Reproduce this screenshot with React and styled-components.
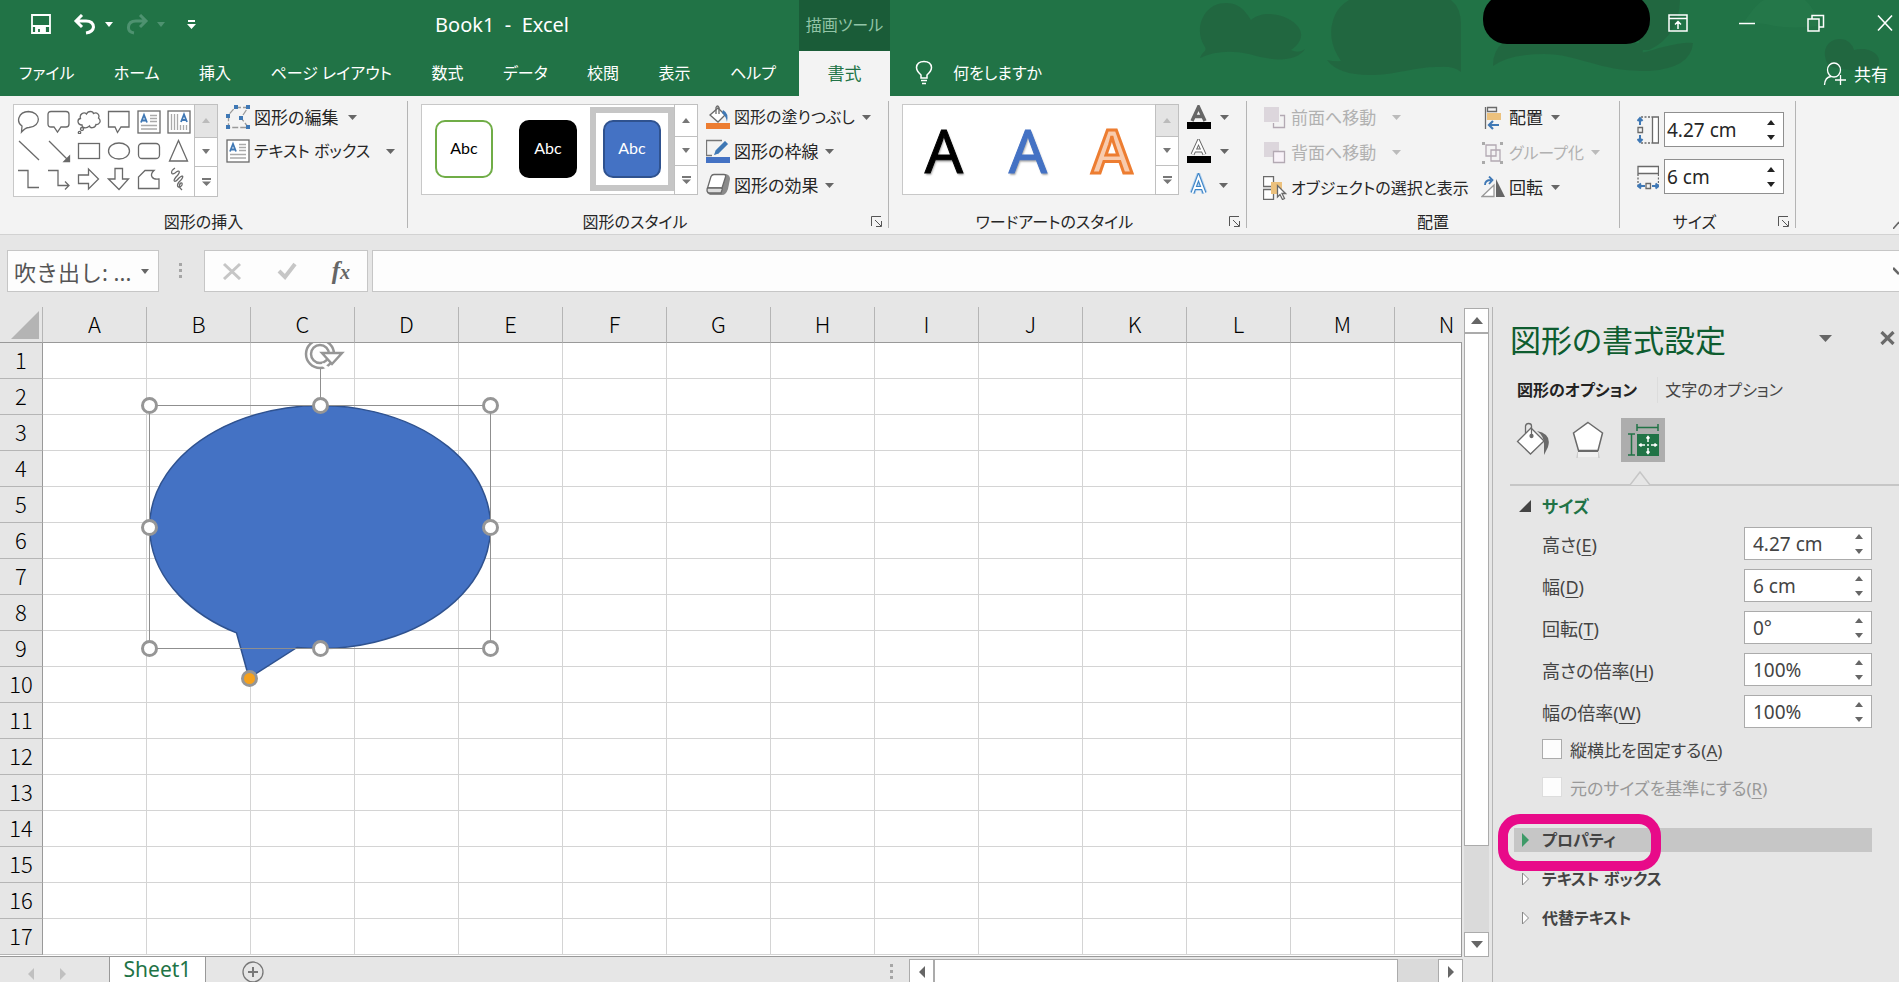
import React, {useState} from 'react';
import styled, {createGlobalStyle} from 'styled-components';

const COLUMNS = ['A', 'B', 'C', 'D', 'E', 'F', 'G', 'H', 'I', 'J', 'K', 'L', 'M', 'N'];
const ROWS = Array.from({length: 17}, (_, i) => i + 1);
const TABS = ['ファイル', 'ホーム', '挿入', 'ページ レイアウト', '数式', 'データ', '校閲', '表示', 'ヘルプ'];

const Caret = ({color = '#666', up, size = 9}) => (
  <svg width={size} height={size > 10 ? 7 : 5} viewBox="0 0 10 5" preserveAspectRatio="none" aria-hidden="true">
    <path d={up ? 'M0 5L5 0L10 5Z' : 'M0 0H10L5 5Z'} fill={color}/>
  </svg>
);

const Icon = ({w = 24, h = 24, children}) => (
  <svg width={w} height={h} viewBox={`0 0 ${w} ${h}`} fill="none" stroke="#6a6a6a" strokeWidth="1.3" aria-hidden="true">
    {children}
  </svg>
);

const TextBoxShape = () => (
  <>
    <rect x="1" y="1" width="22" height="22" fill="#fff"/>
    <path d="M13 5.500h7M13 8.500h7M13 11.500h7M4 15.500h16M4 19h16" stroke="#aaa"/>
    <path d="M4 12.500L7 5L10 12.500M5 10.500h4" stroke="#3f78b5" strokeWidth="1.800"/>
  </>
);

// the small drawings in the insert gallery, row by row
const SHAPES = [
  ['円形吹き出し', <path d="M5 16C-1 12 1 2 11.500 1.500C24 2 25 16 12 17.500C10 17.500 8 18 4.500 22Z"/>],
  ['角丸吹き出し', <path d="M4 1.500H19Q22 1.500 22 4.500V14Q22 17 19 17H14L10.500 22L7 17H4Q1 17 1 14V4.500Q1 1.500 4 1.500Z"/>],
  ['雲形吹き出し', <><path d="M5 15C0 15 0 9 3.500 8.500C2 4 7 1.500 9.500 4C11 .5 16 1 16.500 3.500C20 1.500 23 5 21.500 8C25 11 22 15 19 14.500C18 18.500 13 18.500 12.500 16C9 19 5 18 5 15Z"/><circle cx="5" cy="19" r="1.500"/><circle cx="2.500" cy="22.500" r="1.200"/></>],
  ['四角形吹き出し', <path d="M1.500 1.500H22V17H14L10.500 22.500L8 17H1.500Z"/>],
  ['テキスト ボックス', <TextBoxShape/>],
  ['縦書きテキスト ボックス', <><rect x="1" y="1" width="22" height="22" fill="#fff"/><path d="M4.500 4v16M7.500 4v16M10.500 4v16M13.500 15v5M16.500 15v5M19.500 15v5" stroke="#aaa"/><path d="M14 12L17 4.500L20 12M15 10h4" stroke="#3f78b5" strokeWidth="1.800"/></>],
  ['直線', <path d="M2 2L22 21"/>],
  ['矢印', <><path d="M2 2L21 21"/><path d="M22.500 17V22.500H17Z" fill="#6a6a6a"/></>],
  ['正方形', <rect x="1.500" y="4.500" width="21" height="15"/>],
  ['楕円', <ellipse cx="12" cy="12" rx="10.500" ry="8"/>],
  ['角丸四角形', <rect x="1.500" y="4.500" width="21" height="15" rx="3.500"/>],
  ['三角形', <path d="M11.500 1.500L20.500 22H2.500Z"/>],
  ['カギ線', <path d="M1 3.500H11V20.500H22"/>],
  ['カギ線矢印', <path d="M1 3.500H11V18.500H21.500M18 14.500L22 18.500L18 22.500"/>],
  ['右矢印', <path d="M1.500 8H11.500V2L21.500 12L11.500 22V16.500H1.500Z"/>],
  ['下矢印', <path d="M8 1.500H15.500V12H21.500L12 22.500L1.500 12H8Z"/>],
  ['フリーフォーム', <path d="M8 3.500H17C12 8 15 13 22 12V21.500H1.500V10Z"/>],
  ['曲線', <path d="M8 1C3 4 4 9 8 6C13 2 14 5 9 10C5 15 8 16 12 11C17 7 17 10 12 15C8 20 13 22 15 18C16 14 11 16 13 21L15 23"/>],
];

const icons = {
  editShape: <Icon><path d="M9 2.500H22L15 13L22.500 22.500H2.500V10Z" stroke="#999" strokeDasharray="6 2"/><path d="M8 0h4v4h-4zM20 0h4v4h-4zM0 9h4v4h-4zM13 11h4v4h-4zM0 20h4v4h-4zM20 20h4v4h-4z" fill="#3f78b5" stroke="none"/></Icon>,
  textBox: <Icon><TextBoxShape/></Icon>,
  fill: <Icon><path d="M4 10L12 3L19 10L12 17Z" fill="#fff"/><path d="M10 9V2.500Q11.500-.5 13 2.500V9"/><path d="M17 5Q23 8 21 17Q20 11 16 8Z" fill="#3f78b5" stroke="none"/><path d="M0 18H24V24H0Z" fill="#ed7d31" stroke="none"/></Icon>,
  outline: <Icon><path d="M16 1.500H.5V16.500H6M16 10V12" stroke="#777"/><path d="M7 17L9 11L19 1L23 5L13 15Z" fill="#3f78b5" stroke="#f3f3f3"/><path d="M0 18H24V24H0Z" fill="#4472c4" stroke="none"/></Icon>,
  effects: <Icon><path d="M1 20L6 4Q7 1 9 1H20Q24 2 24 6L22 16Q20 22 16 22H4Z" fill="#8a8a8a" stroke="none"/><path d="M5 3.500Q6 1.500 8 1.500H18Q20 1.500 19.500 4L16 15H1.500Z" fill="#fff"/><path d="M1.500 15H14.500Q17 15 16 17L15 20H3Q0 19 1.500 15Z" fill="#ddd"/></Icon>,
  textFill: <Icon><path d="M5 16L11.500 2L18 16M7.500 11.500H15.500" stroke="#666" strokeWidth="3.400"/><path d="M0 17H24V24H0Z" fill="#000" stroke="none"/></Icon>,
  textOutline: <Icon><path d="M5.500 15.500L11.500 2.500L17.500 15.500M8 11.500H15" stroke="#666" strokeWidth="4"/><path d="M5.500 15.500L11.500 2.500L17.500 15.500M8 11.500H15" stroke="#fff" strokeWidth="2"/><path d="M0 17H24V24H0Z" fill="#000" stroke="none"/></Icon>,
  textEffects: <Icon><path d="M5.500 20L11.500 4L17.500 20M8 15H15" stroke="#b5d3ef" strokeWidth="6"/><path d="M5.500 20L11.500 4L17.500 20M8 15H15" stroke="#3f85c6" strokeWidth="4"/><path d="M5.500 20L11.500 4L17.500 20M8 15H15" stroke="#fff" strokeWidth="1.800"/></Icon>,
  front: <Icon><path d="M1 1H16V16H1Z" fill="#dcd6dc" stroke="none"/><path d="M17 9.500H21.500V21.500H10.500V17" stroke="#b3a9b3"/></Icon>,
  back: <Icon><path d="M1 1H16V16H1Z" fill="#dcd6dc" stroke="none"/><path d="M10.500 10.500H21.500V21.500H10.500Z" fill="#f8f2f8" stroke="#b3a9b3"/></Icon>,
  select: <Icon><path d="M.5.5H10.500V10.500H.5ZM.5 13.500H10.500V23.500H.5Z" fill="#fff"/><path d="M8 6H19V18H8Z" fill="#ecc17d" stroke="none"/><path d="M14.500 9.500V21L17 18.500L19.500 23.500L21.500 22.500L19 17.500H22.500Z" fill="#fff"/></Icon>,
  align: <Icon><path d="M4.500 1V23M6.500 1.500H15.500V5.500H6.500Z"/><path d="M6 7H20V14H6Z" fill="#ecc17d" stroke="none"/><path d="M18 19H8M12 15L8 19L12 23" stroke="#3f78b5" strokeWidth="2.200"/></Icon>,
  group: <Icon><path d="M5 4H15V15H5ZM10 9H19V20H10Z" stroke="#b3a9b3"/><path d="M1 1h3v3h-3zM19 1h3v3h-3zM1 20h3v3h-3zM19 20h3v3h-3z" fill="#aaa" stroke="none"/></Icon>,
  rotate: <Icon><path d="M13 20.500H1L13 9Z" fill="#fff" stroke="#999"/><path d="M15 3L24 21H15Z" fill="#666" stroke="none"/><path d="M4 9Q4 4 10 4M8 .5L11.500 4L8 8" stroke="#3f78b5" strokeWidth="1.800"/></Icon>,
  height: <Icon w={22} h={28}><path d="M15.500 1H21.500V27H15.500Z" fill="#fff"/><path d="M4 1H15M4 27H15" strokeDasharray="2 1.500"/><path d="M1 11.500H5.500V16.500H1Z"/><path d="M3 9V2M.5 5L3 2L5.500 5M3 19V26M.5 23L3 26L5.500 23" stroke="#3f78b5" strokeWidth="2"/></Icon>,
  width: <Icon w={22} h={28}><path d="M1 3.500H21.500V10.500H1Z" fill="#fff"/><path d="M1 11V22M21.500 11V22" strokeDasharray="2 1.500"/><path d="M9 20.500H13.500V25.500H9Z"/><path d="M8 23H1M4 20.500L1 23L4 25.500M15 23H21M18.500 20.500L21.500 23L18.500 25.500" stroke="#3f78b5" strokeWidth="2"/></Icon>,
};

const Launcher = () => (
  <LauncherButton aria-label="詳細設定">
    <svg width="11" height="11" viewBox="0 0 11 11" fill="none" stroke="#555"><path d="M.5 10V.5H10M4 4L10 10M10.500 5V10.500H5"/></svg>
  </LauncherButton>
);

const GalleryScroll = ({disabledTop}) => (
  <ScrollColumn>
    <ScrollStep $off={disabledTop} $h={32} aria-label="上へ"><Caret up color={disabledTop ? '#bbb' : '#777'} size={8}/></ScrollStep>
    <ScrollStep $h={29} aria-label="下へ"><Caret color="#777" size={8}/></ScrollStep>
    <ScrollStep $h={29} $last aria-label="その他">
      <svg width="9" height="8" viewBox="0 0 9 8"><path d="M0 0H9V2H0ZM0 3.500H9L4.500 8Z" fill="#777"/></svg>
    </ScrollStep>
  </ScrollColumn>
);

const Command = ({icon, label, caret = true, disabled, gap = 10, small}) => (
  <CommandButton disabled={disabled} $small={small}>
    {icon}
    <CommandLabel>{label}</CommandLabel>
    {caret && <CaretSlot $gap={gap}><Caret color={disabled ? '#bbb' : '#666'}/></CaretSlot>}
  </CommandButton>
);

const RibbonGroup = ({width, left, label, launcher, children}) => (
  <Group $w={width}>
    <GroupBody $left={left}>{children}</GroupBody>
    <GroupFooter $launcher={launcher}><span>{label}</span>{launcher && <Launcher/>}</GroupFooter>
  </Group>
);

const SizeBox = ({id, label, value, onChange, ribbon}) => (
  <SpinBox $ribbon={ribbon}>
    <input id={id} type="text" aria-label={label} value={value} onChange={(e) => onChange(e.target.value)}/>
    <SpinButtons>
      <button aria-label="増やす"><Caret up color={ribbon ? '#222' : '#666'} size={8}/></button>
      <button aria-label="減らす"><Caret color={ribbon ? '#222' : '#666'} size={8}/></button>
    </SpinButtons>
  </SpinBox>
);

const TitleArt = () => (
  <Art viewBox="0 0 700 96" preserveAspectRatio="xMaxYMin slice" aria-hidden="true">
    <g fill="#22633f" opacity=".75">
      <path d="M1 58C4 50 8 52 6 47C-6 30 4 3 27 3C42 3 48 14 52 20C66 8 92 16 100 28C106 38 98 46 92 50Q100 54 106 49C96 64 70 60 50 54Q22 48 1 58Z"/>
      <path d="M150 0H252Q262 8 262 24V72Q255 66 240 67C220 66 200 74 175 75Q140 76 128 60Q136 62 142 61Q126 38 136 15Q140 6 150 0Z"/>
      <path d="M294 66Q294 50 304 43H440Q450 56 434 55Q420 54 418 50Q432 58 460 48Q484 42 494 43Q492 68 450 71C400 72 380 54 345 54Q310 54 294 66Z"/>
      <path d="M440 0H481Q480 36 450 50H440Z"/>
      <path d="M630 66C620 50 630 38 642 39Q652 40 655 50C670 46 686 55 678 68Q660 74 630 66Z"/>
    </g>
    <path d="M545 22Q560 0 566 0H606Q618 10 618 26Q590 30 566 24Z" fill="#2a7d50" opacity=".35"/>
  </Art>
);

const QuickAccess = () => (
  <Quick>
    <button aria-label="上書き保存">
      <svg width="20" height="20" viewBox="0 0 20 20" fill="none" stroke="#fff" strokeWidth="1.800"><path d="M1 1H19V19H1ZM1 12H19" /><path d="M5 14H14V19H5Z" fill="#fff"/><path d="M8 15V18" stroke="#217346"/></svg>
    </button>
    <button aria-label="元に戻す">
      <svg width="24" height="21" viewBox="0 0 24 21" fill="none" stroke="#fff" strokeWidth="3"><path d="M3 7H13Q20 7 20.500 13Q20 18 13 19M9 1L3 7L9 13"/></svg>
      <Caret color="#fff" size={8}/>
    </button>
    <button aria-label="やり直し">
      <svg width="24" height="21" viewBox="0 0 24 21" fill="none" stroke="#4e9270" strokeWidth="3"><path d="M21 7H11Q4 7 3.500 13Q3 18 9 19M15 1L21 7L15 13"/></svg>
      <Caret color="#4e9270" size={8}/>
    </button>
    <button aria-label="クイック アクセスのカスタマイズ">
      <svg width="9" height="9" viewBox="0 0 9 9"><path d="M1 0H8V2H1ZM0 4H9L4.500 9Z" fill="#fff"/></svg>
    </button>
  </Quick>
);

const SpeechBalloon = () => (
  <Drawing width="372" height="354" viewBox="128 342 372 354" aria-label="吹き出し: 円形">
    <path d="M236.500 631.900A170.500 121.500 0 1 1 297 646.400L249 677Z" fill="#4472c4" stroke="#2f528f" strokeWidth="1.500"/>
    <path d="M149.500 404.500H490.500V647.500H149.500ZM320.500 368V404" fill="none" stroke="#8f8f8f"/>
    <circle cx="320" cy="353" r="11.500" fill="none" stroke="#969696" strokeWidth="7.500"/>
    <circle cx="320" cy="353" r="11.500" fill="none" stroke="#fff" strokeWidth="2.500"/>
    <path d="M322 352H342L332 363Z" fill="#fff" stroke="#969696" strokeWidth="2.500"/>
    <path d="M322 363L330 369" stroke="#fff" strokeWidth="3"/>
    {[[149.5, 404.5], [320.5, 404.5], [490.5, 404.5], [149.5, 526.5], [490.5, 526.5], [149.5, 647.5], [320.5, 647.5], [490.5, 647.5]].map(([x, y]) => (
      <circle key={`${x}-${y}`} cx={x} cy={y} r="7" fill="#fff" stroke="#969696" strokeWidth="3"/>
    ))}
    <circle cx="249.500" cy="677.500" r="7" fill="#f5a11c" stroke="#969696" strokeWidth="3"/>
  </Drawing>
);

const FormatPane = () => {
  const [fields, setFields] = useState([
    {id: 'height', label: '高さ', hotkey: 'E', value: '4.27 cm'},
    {id: 'width', label: '幅', hotkey: 'D', value: '6 cm'},
    {id: 'angle', label: '回転', hotkey: 'T', value: '0°'},
    {id: 'scaleHeight', label: '高さの倍率', hotkey: 'H', value: '100%'},
    {id: 'scaleWidth', label: '幅の倍率', hotkey: 'W', value: '100%'},
  ]);
  const [locked, setLocked] = useState(false);

  const update = (id, value) => {
    setFields(fields.map((f) => (f.id === id ? {...f, value} : f)));
  };

  return (
    <Pane>
      <PaneHeader>
        <h2>図形の書式設定</h2>
        <button aria-label="作業ウィンドウのオプション"><Caret size={13}/></button>
        <button aria-label="閉じる">
          <svg width="15" height="14" viewBox="0 0 15 14" stroke="#6a6a6a" strokeWidth="3.200"><path d="M1.500 1L13.500 13M13.500 1L1.500 13"/></svg>
        </button>
      </PaneHeader>
      <PaneTabs>
        <PaneTab $active>図形のオプション</PaneTab>
        <PaneTab>文字のオプション</PaneTab>
      </PaneTabs>
      <PaneIcons>
        <PaneIcon aria-label="塗りつぶしと線">
          <svg width="34" height="36" viewBox="0 0 34 36" fill="none" stroke="#6a6a6a" strokeWidth="1.300"><path d="M1.500 19.500L15 6L28 19L14.500 32Z" fill="#fff"/><path d="M9.500 11V4Q10 1.500 12.500 1.500Q15.500 1.500 15.500 4V13"/><circle cx="15.500" cy="14" r="1.500" fill="#6a6a6a"/><path d="M21 9Q36 12 32 25L28 33V22Q28 14 21 9Z" fill="#6a6a6a" stroke="none"/></svg>
        </PaneIcon>
        <PaneIcon aria-label="効果">
          <svg width="34" height="38" viewBox="0 0 34 38" fill="none" stroke="#6a6a6a" strokeWidth="1.500"><path d="M7 31L6 37M27 31L28 37" stroke="#ccc"/><path d="M7 31H27V36H7Z" fill="#f0f0f0" stroke="none"/><path d="M17 1.500L31.500 12L27 29.500H7.500L2.500 12Z" fill="#fff"/><path d="M7 30H27" strokeWidth="2"/></svg>
        </PaneIcon>
        <PaneIcon $active aria-label="サイズとプロパティ">
          <svg width="32" height="34" viewBox="0 0 32 34" fill="none" stroke="#217346" strokeWidth="1.500"><path d="M10 1V8M31 1V8M10 4.500H31M1 11H8M1 32H8M4.500 11V32"/><path d="M10 11H32V33H10Z" fill="#217346" stroke="none"/><path d="M21 14V19M21 25V30M13 22H18M24 22H29M19.500 15.500L21 13.500L22.500 15.500M19.500 28.500L21 30.500L22.500 28.500M14.500 20.500L12.500 22L14.500 23.500M27.500 20.500L29.500 22L27.500 23.500M20 22H22" stroke="#fff" strokeWidth="1.500"/></svg>
        </PaneIcon>
      </PaneIcons>
      <PaneRule><svg width="22" height="14" viewBox="0 0 22 14" fill="#e6e6e6" stroke="#c6c6c6" strokeWidth="1.500"><path d="M1 14L11 1L21 14"/></svg></PaneRule>

      <Section>
        <SectionButton $open>
          <svg width="12" height="12" viewBox="0 0 12 12"><path d="M12 0V12H0Z" fill="#444"/></svg>
          <span>サイズ</span>
        </SectionButton>
        <Fields>
          {fields.map((f) => (
            <Field key={f.id}>
              <label htmlFor={f.id}>{f.label}(<u>{f.hotkey}</u>)</label>
              <SizeBox id={f.id} value={f.value} onChange={(v) => update(f.id, v)}/>
            </Field>
          ))}
        </Fields>
        <Check>
          <input id="lock" type="checkbox" checked={locked} onChange={() => setLocked(!locked)}/>
          <label htmlFor="lock">縦横比を固定する(<u>A</u>)</label>
        </Check>
        <Check $disabled>
          <input id="original" type="checkbox" disabled/>
          <label htmlFor="original">元のサイズを基準にする(<u>R</u>)</label>
        </Check>
      </Section>

      <Sections>
        <SectionButton $hover>
          <svg width="12" height="14" viewBox="0 0 12 14"><path d="M3 0L10 7L3 14Z" fill="#3e9a68"/></svg>
          <span>プロパティ</span>
          <Highlight/>
        </SectionButton>
        <SectionButton>
          <svg width="12" height="14" viewBox="0 0 12 14"><path d="M3.500 1L9.500 7L3.500 13Z" fill="#fff" stroke="#888"/></svg>
          <span>テキスト ボックス</span>
        </SectionButton>
        <SectionButton>
          <svg width="12" height="14" viewBox="0 0 12 14"><path d="M3.500 1L9.500 7L3.500 13Z" fill="#fff" stroke="#888"/></svg>
          <span>代替テキスト</span>
        </SectionButton>
      </Sections>
    </Pane>
  );
};

const App = () => {
  const [height, setHeight] = useState('4.27 cm');
  const [width, setWidth] = useState('6 cm');
  const [formula, setFormula] = useState('');

  return (
    <Window>
      <GlobalStyle/>
      <Header>
        <TitleArt/>
        <HeaderLeft>
          <TitleRow>
            <QuickAccess/>
            <BookTitle>Book1&nbsp; -&nbsp; Excel</BookTitle>
          </TitleRow>
          <Tabs>
            {TABS.map((tab) => <Tab key={tab}>{tab}</Tab>)}
          </Tabs>
        </HeaderLeft>
        <ContextTab>
          <ContextTitle>描画ツール</ContextTitle>
          <ActiveTab>書式</ActiveTab>
        </ContextTab>
        <HeaderRight>
          <WindowButtons>
            <Account/>
            <button aria-label="リボンの表示オプション"><svg width="20" height="18" viewBox="0 0 20 18" fill="none" stroke="#fff" strokeWidth="1.500"><path d="M1 1H19V17H1ZM1 4.500H19M10 15V8M7 10.500L10 7.500L13 10.500"/></svg></button>
            <button aria-label="最小化"><svg width="20" height="18" viewBox="0 0 20 18" stroke="#fff" strokeWidth="1.500"><path d="M2 9.500H18"/></svg></button>
            <button aria-label="元に戻す (縮小)"><svg width="20" height="18" viewBox="0 0 20 18" fill="none" stroke="#fff" strokeWidth="1.500"><path d="M2 5H13V17H2ZM6 5V1.500H17.500V13H13"/></svg></button>
            <button aria-label="閉じる"><svg width="20" height="18" viewBox="0 0 20 18" stroke="#fff" strokeWidth="1.600"><path d="M3 1.500L17 16.500M17 1.500L3 16.500"/></svg></button>
          </WindowButtons>
          <AssistRow>
            <Tab>
              <svg width="18" height="25" viewBox="0 0 18 25" fill="none" stroke="#fff" strokeWidth="1.500"><path d="M6 18V15Q1.500 11 1.500 7.500Q2 1.500 9 1.500Q16 1.500 16.500 7.500Q16.500 11 12 15V18ZM6 20.500H12M7 23.500H11"/></svg>
              何をしますか
            </Tab>
            <ShareButton>
              <svg width="24" height="24" viewBox="0 0 24 24" fill="none" stroke="#fff" strokeWidth="1.300"><ellipse cx="11" cy="8" rx="6.500" ry="7"/><path d="M1.500 23Q2 15 8 14.500M17.500 13V23M12 18H23"/></svg>
              共有
            </ShareButton>
          </AssistRow>
        </HeaderRight>
      </Header>

      <Ribbon>
        <RibbonGroup width={407} left={13} label="図形の挿入">
          <Gallery $tall>
            <ShapeGrid>
              {SHAPES.map(([name, drawing]) => <button key={name} aria-label={name}><Icon>{drawing}</Icon></button>)}
            </ShapeGrid>
            <GalleryScroll disabledTop/>
          </Gallery>
          <Commands>
            <Command icon={icons.editShape} label="図形の編集" gap={6}/>
            <Command icon={icons.textBox} label="テキスト ボックス" gap={12} small/>
          </Commands>
        </RibbonGroup>
        <Divider/>
        <RibbonGroup width={480} left={13} label="図形のスタイル" launcher>
          <Gallery>
            <StyleCell><Swatch $bg="#fff" $line="#70ad47" $color="#000">Abc</Swatch></StyleCell>
            <StyleCell><Swatch $bg="#000" $line="#000" $color="#fff">Abc</Swatch></StyleCell>
            <StyleCell $selected><Swatch $bg="#4472c4" $line="#2f528f" $color="#fff">Abc</Swatch></StyleCell>
            <GalleryScroll/>
          </Gallery>
          <Commands>
            <Command icon={icons.fill} label="図形の塗りつぶし" gap={3} small/>
            <Command icon={icons.outline} label="図形の枠線" gap={3}/>
            <Command icon={icons.effects} label="図形の効果" gap={3}/>
          </Commands>
        </RibbonGroup>
        <Divider/>
        <RibbonGroup width={357} left={13} label="ワードアートのスタイル" launcher>
          <Gallery>
            <WordArt $color="#000">A</WordArt>
            <WordArt $color="#4472c4">A</WordArt>
            <WordArt $color="#f8cbad" $line="#ed7d31">A</WordArt>
            <GalleryScroll disabledTop/>
          </Gallery>
          <Commands>
            <Command icon={icons.textFill} gap={1}/>
            <Command icon={icons.textOutline} gap={1}/>
            <Command icon={icons.textEffects} gap={0}/>
          </Commands>
        </RibbonGroup>
        <Divider/>
        <RibbonGroup width={372} left={16} label="配置">
          <Commands $flush $w={218}>
            <Command icon={icons.front} label="前面へ移動" disabled gap={12}/>
            <Command icon={icons.back} label="背面へ移動" disabled gap={12}/>
            <Command icon={icons.select} label="オブジェクトの選択と表示" caret={false} small/>
          </Commands>
          <Commands $flush>
            <Command icon={icons.align} label="配置" gap={4}/>
            <Command icon={icons.group} label="グループ化" disabled gap={3} small/>
            <Command icon={icons.rotate} label="回転" gap={4}/>
          </Commands>
        </RibbonGroup>
        <Divider/>
        <RibbonGroup width={175} left={17} label="サイズ" launcher>
          <RibbonSizes>
            <RibbonSize>{icons.height}<SizeBox ribbon label="図形の高さ" value={height} onChange={setHeight}/></RibbonSize>
            <RibbonSize>{icons.width}<SizeBox ribbon label="図形の幅" value={width} onChange={setWidth}/></RibbonSize>
          </RibbonSizes>
        </RibbonGroup>
        <Divider/>
        <Collapse aria-label="リボンを折りたたむ"><svg width="6" height="8" viewBox="0 0 6 8" fill="none" stroke="#666" strokeWidth="1.500"><path d="M0 8L6 1"/></svg></Collapse>
      </Ribbon>

      <FormulaBar>
        <NameBox><span>吹き出し: ...</span><Caret size={8}/></NameBox>
        <Dots/>
        <FormulaButtons>
          <button aria-label="キャンセル"><svg width="20" height="18" viewBox="0 0 20 18" stroke="#c6c6c6" strokeWidth="3"><path d="M2 2L18 17M18 2L2 17"/></svg></button>
          <button aria-label="入力"><svg width="20" height="18" viewBox="0 0 20 18" fill="none" stroke="#c6c6c6" strokeWidth="4"><path d="M2 9L8 15L18 2"/></svg></button>
          <FxButton aria-label="関数の挿入">f<small>x</small></FxButton>
        </FormulaButtons>
        <FormulaInput>
          <input aria-label="数式バー" value={formula} onChange={(e) => setFormula(e.target.value)}/>
          <svg width="6" height="8" viewBox="0 0 6 8" fill="none" stroke="#666" strokeWidth="2.500"><path d="M0 1L6 7"/></svg>
        </FormulaInput>
      </FormulaBar>

      <Workspace>
        <Book>
          <SheetRow>
            <Sheet>
              <Grid>
                <colgroup>
                  <col width="43"/>
                  {COLUMNS.map((c) => <col key={c} width="104"/>)}
                </colgroup>
                <thead>
                  <tr>
                    <Corner><svg width="28" height="28" viewBox="0 0 28 28"><path d="M28 0V28H0Z" fill="#b4b4b4"/></svg></Corner>
                    {COLUMNS.map((c) => <ColumnHead key={c} scope="col">{c}</ColumnHead>)}
                  </tr>
                </thead>
                <tbody>
                  {ROWS.map((r) => (
                    <tr key={r}>
                      <RowHead scope="row">{r}</RowHead>
                      {COLUMNS.map((c) => <Cell key={c}/>)}
                    </tr>
                  ))}
                </tbody>
              </Grid>
              <SpeechBalloon/>
            </Sheet>
            <VScroll>
              <ScrollButton aria-label="上へスクロール"><Caret up size={12}/></ScrollButton>
              <VThumb/>
              <ScrollButton aria-label="下へスクロール"><Caret size={12}/></ScrollButton>
            </VScroll>
          </SheetRow>
          <BottomBar>
            <SheetNav>
              <svg width="6" height="12" viewBox="0 0 6 12"><path d="M6 0V12L0 6Z" fill="#c0c0c0"/></svg>
              <svg width="6" height="12" viewBox="0 0 6 12"><path d="M0 0V12L6 6Z" fill="#c0c0c0"/></svg>
            </SheetNav>
            <SheetTab>Sheet1</SheetTab>
            <TabsRest>
              <button aria-label="新しいシート"><svg width="22" height="22" viewBox="0 0 22 22" fill="none" stroke="#777"><circle cx="11" cy="11" r="10" strokeWidth="1.300"/><path d="M11 6V16M6 11H16" strokeWidth="2"/></svg></button>
              <Dots/>
            </TabsRest>
            <HScroll>
              <ScrollButton aria-label="左へスクロール"><svg width="6" height="12" viewBox="0 0 6 12"><path d="M6 0V12L0 6Z" fill="#666"/></svg></ScrollButton>
              <HThumb/>
              <ScrollButton aria-label="右へスクロール"><svg width="6" height="12" viewBox="0 0 6 12"><path d="M0 0V12L6 6Z" fill="#666"/></svg></ScrollButton>
            </HScroll>
          </BottomBar>
        </Book>
        <FormatPane/>
      </Workspace>
    </Window>
  );
};

export default App;


const GlobalStyle = createGlobalStyle`
  * {
    box-sizing: border-box;
  }
  body {
    margin: 0;
    background: #e6e6e6;
    font-family: "Noto Sans", "Noto Sans CJK JP", sans-serif;
    font-size: 17px;
    font-feature-settings: "palt";
    color: #262626;
  }
  button, input {
    font: inherit;
    font-feature-settings: inherit;
    color: inherit;
    margin: 0;
    padding: 0;
    border: 0;
    background: none;
  }
  button {
    white-space: nowrap;
  }
  svg {
    flex: none;
    display: block;
  }
`;

const Window = styled.div`
  height: 100vh;
  display: flex;
  flex-direction: column;
  overflow: hidden;
`;

const Header = styled.header`
  position: relative;
  display: flex;
  flex: none;
  height: 96px;
  background: #217346;
  color: #fff;
`;

const Art = styled.svg`
  position: absolute;
  right: 0;
  top: 0;
  width: 700px;
  height: 96px;
`;

const HeaderLeft = styled.div`
  flex: 0 0 799px;
  display: flex;
  flex-direction: column;
`;

const TitleRow = styled.div`
  display: flex;
  align-items: center;
  justify-content: space-between;
  height: 51px;
  padding: 0 230px 3px 31px;
`;

const Quick = styled.div`
  display: flex;
  align-items: center;
  gap: 22px;

  button {
    display: flex;
    align-items: center;
    gap: 8px;
  }
  button:nth-child(3) {
    margin-left: -10px;
  }
`;

const BookTitle = styled.div`
  font-size: 20px;
`;

const Tabs = styled.nav`
  flex: 1;
  display: flex;
  justify-content: space-between;
  padding: 0 23px 0 19px;
`;

const Tab = styled.button`
  display: flex;
  align-items: center;
  gap: 20px;
  padding-bottom: 3px;
  font-size: 16px;
`;

const ContextTab = styled.div`
  flex: 0 0 91px;
  display: flex;
  flex-direction: column;
`;

const ContextTitle = styled.div`
  display: flex;
  align-items: center;
  justify-content: center;
  height: 51px;
  padding-bottom: 4px;
  background: #1a5c38;
  color: #92c4a6;
  font-size: 16px;
`;

const ActiveTab = styled.button`
  flex: 1;
  padding-bottom: 3px;
  background: #f3f3f3;
  color: #217346;
`;

const HeaderRight = styled.div`
  position: relative;
  flex: 1;
  display: flex;
  flex-direction: column;
`;

const WindowButtons = styled.div`
  display: flex;
  justify-content: flex-end;
  align-items: center;
  gap: 49px;
  height: 51px;
  padding: 0 4px 5px 0;
`;

const Account = styled.div`
  align-self: flex-start;
  width: 167px;
  height: 50px;
  margin: -6px -31px 0 0;
  border-radius: 24px;
  background: #000;
`;

const AssistRow = styled.div`
  flex: 1;
  display: flex;
  justify-content: space-between;
  padding: 0 11px 0 25px;
`;

const ShareButton = styled.button`
  display: flex;
  align-items: center;
  gap: 7px;
`;

const Ribbon = styled.div`
  display: flex;
  flex: none;
  height: 139px;
  background: #f3f3f3;
  border-bottom: 1px solid #d2d2d2;
`;

const Divider = styled.div`
  flex: 0 0 1px;
  margin: 5px 0 6px;
  background: #b4b4b4;
`;

const Group = styled.section`
  flex: 0 0 ${({$w}) => $w}px;
  display: flex;
  flex-direction: column;
  padding: 4px 0 2px;
`;

const GroupBody = styled.div`
  flex: 1;
  display: flex;
  align-items: flex-start;
  padding-left: ${({$left}) => $left}px;
`;

const GroupFooter = styled.div`
  position: relative;
  display: flex;
  align-items: center;
  justify-content: center;
  height: 22px;
  padding-right: ${({$launcher}) => ($launcher ? 26 : 0)}px;
  font-size: 16px;
`;

const LauncherButton = styled.button`
  position: absolute;
  right: 6px;
  bottom: 5px;
`;

const Gallery = styled.div`
  display: flex;
  margin-top: 4px;
  height: ${({$tall}) => ($tall ? 93 : 91)}px;
  background: #fff;
  border: 1px solid #c8c8c8;
  border-right: 0;
`;

const ShapeGrid = styled.div`
  display: grid;
  grid-template-columns: repeat(6, 30px);
  align-content: space-evenly;

  button {
    display: flex;
    justify-content: center;
  }
`;

const ScrollColumn = styled.div`
  display: flex;
  flex-direction: column;
  width: 24px;
  margin: -1px 0;
  border: 1px solid #c0c0c0;
`;

const ScrollStep = styled.button`
  flex: ${({$h}) => $h} 0 0;
  display: flex;
  align-items: center;
  justify-content: center;
  background: ${({$off}) => ($off ? '#e4e4e4' : '#fff')};
  border-bottom: ${({$last}) => ($last ? '0' : '1px solid #c0c0c0')};
`;

const StyleCell = styled.div`
  width: 84px;
  height: 84px;
  margin-top: 2px;
  display: flex;
  align-items: center;
  justify-content: center;
  border: ${({$selected}) => ($selected ? '6px solid #c6c6c6' : '0')};
`;

const Swatch = styled.button`
  flex: none;
  width: 58px;
  height: 58px;
  padding-bottom: 4px;
  border: 2px solid ${({$line}) => $line};
  border-radius: 10px;
  background: ${({$bg}) => $bg};
  color: ${({$color}) => $color};
  font-family: Lato, sans-serif;
  font-size: 16px;
`;

const WordArt = styled.button`
  width: 82px;
  margin-right: 2px;
  font-size: 60px;
  line-height: 86px;
  font-weight: ${({$line}) => ($line ? 600 : 400)};
  color: ${({$color}) => $color};
  -webkit-text-stroke: ${({$line, $color}) => ($line ? `3px ${$line}` : `1px ${$color}`)};
  text-shadow: ${({$line}) => ($line ? 'none' : '1px 2px 2px #aaa')};
`;

const Commands = styled.div`
  display: flex;
  flex-direction: column;
  align-items: flex-start;
  width: ${({$w}) => ($w ? `${$w}px` : 'auto')};
  padding-left: ${({$flush}) => ($flush ? 0 : 8)}px;

  button {
    height: ${({$flush}) => ($flush ? 35 : 34)}px;
  }
`;

const CommandButton = styled.button`
  display: flex;
  align-items: center;
  gap: 4px;
  font-size: ${({$small}) => ($small ? 16 : 17)}px;
  color: ${({disabled}) => (disabled ? '#b1b1b1' : '#262626')};
`;

const CommandLabel = styled.span`
  padding-bottom: 2px;
`;

const CaretSlot = styled.span`
  padding-left: ${({$gap}) => $gap}px;
`;

const SpinBox = styled.div`
  display: flex;
  width: ${({$ribbon}) => ($ribbon ? 120 : 128)}px;
  height: ${({$ribbon}) => ($ribbon ? 35 : 33)}px;
  padding-left: ${({$ribbon}) => ($ribbon ? 2 : 8)}px;
  padding-right: 7px;
  background: #fff;
  border: 1px solid ${({$ribbon}) => ($ribbon ? '#8f8f8f' : '#ababab')};
  font-size: 19px;
  color: ${({$ribbon}) => ($ribbon ? '#262626' : '#444')};

  input {
    flex: 1;
    min-width: 0;
    outline: 0;
  }
`;

const SpinButtons = styled.div`
  display: flex;
  flex-direction: column;
  justify-content: center;
  gap: 10px;

  button {
    width: 10px;
    display: flex;
    justify-content: center;
  }
`;

const RibbonSizes = styled.div`
  display: flex;
  flex-direction: column;
  gap: 12px;
  padding-top: 12px;
`;

const RibbonSize = styled.div`
  display: flex;
  align-items: center;
  gap: 5px;
`;

const Collapse = styled.button`
  align-self: flex-end;
  margin-left: auto;
  padding-bottom: 5px;
`;

const FormulaBar = styled.div`
  display: flex;
  flex: none;
  height: 72px;
  padding: 15px 0 15px 7px;
`;

const NameBox = styled.button`
  display: flex;
  align-items: center;
  justify-content: space-between;
  width: 152px;
  padding: 0 9px 0 6px;
  background: #fdfdfd;
  border: 1px solid #c6c6c6;
  font-size: 22px;
  font-feature-settings: normal;
  color: #555;
`;

const Dots = styled.div`
  width: 3px;
  height: 15px;
  margin: 13px 22px 0 20px;
  background: repeating-linear-gradient(#a6a6a6 0 3px, transparent 3px 6px);
`;

const FormulaButtons = styled.div`
  display: flex;
  align-items: center;
  justify-content: space-between;
  width: 164px;
  padding: 0 17px;
  margin-right: 4px;
  background: #fdfdfd;
  border: 1px solid #c6c6c6;
`;

const FxButton = styled.button`
  font-family: "Liberation Serif", serif;
  font-style: italic;
  font-weight: bold;
  font-size: 25px;
  line-height: 28px;
  color: #666;

  small {
    font-size: 20px;
  }
`;

const FormulaInput = styled.div`
  flex: 1;
  display: flex;
  align-items: center;
  background: #fdfdfd;
  border: 1px solid #c6c6c6;
  border-right: 0;

  input {
    flex: 1;
    padding: 0 8px;
    outline: 0;
  }
`;

const Workspace = styled.div`
  flex: 1;
  min-height: 0;
  display: flex;
`;

const Book = styled.main`
  flex: 1;
  min-width: 0;
  display: flex;
  flex-direction: column;
`;

const SheetRow = styled.div`
  flex: 1;
  min-height: 0;
  display: flex;
`;

const Sheet = styled.div`
  position: relative;
  flex: 1;
  min-width: 0;
  overflow: hidden;
  background: linear-gradient(#e6e6e6 35px, #fff 35px);
  border-bottom: 1px solid #999;

  &::after {
    content: "";
    position: absolute;
    right: 0;
    top: 35px;
    bottom: 0;
    border-right: 1px solid #999;
  }
`;

const Grid = styled.table`
  table-layout: fixed;
  width: 1499px;
  border-spacing: 0;
  font-family: "Noto Sans CJK JP", sans-serif;
  font-size: 22px;
  font-feature-settings: normal;
  line-height: 30px;
  color: #000;

  th, td {
    padding: 0;
    font-weight: 300;
  }
  th {
    padding-bottom: 4px;
  }
`;

const ColumnHead = styled.th`
  height: 36px;
  border-right: 1px solid #b5b5b5;
  border-bottom: 1px solid #999;
`;

const Corner = styled.td`
  height: 36px;
  border-right: 1px solid #b5b5b5;
  border-bottom: 1px solid #999;

  svg {
    margin-left: 11px;
  }
`;

const RowHead = styled.th`
  height: 36px;
  background: #e6e6e6;
  border-right: 1px solid #999;
  border-bottom: 1px solid #b5b5b5;
`;

const Cell = styled.td`
  height: 36px;
  border-right: 1px solid #d4d4d4;
  border-bottom: 1px solid #d4d4d4;
`;

// floats over the cells, below the column headings
const Drawing = styled.svg`
  position: absolute;
  left: 128px;
  top: 36px;
`;

const VScroll = styled.div`
  display: flex;
  flex-direction: column;
  width: 25px;
  margin: 1px 3px 0 2px;
  background: #dadada;
`;

const ScrollButton = styled.button`
  flex: 0 0 25px;
  display: flex;
  align-items: center;
  justify-content: center;
  height: 25px;
  background: #fff;
  border: 1px solid #ababab;
`;

const VThumb = styled.div`
  flex: 0 1 79%;
  margin-bottom: auto;
  background: #fff;
  border: 1px solid #ababab;
`;

const BottomBar = styled.div`
  display: flex;
  flex: none;
  height: 25px;
`;

const SheetNav = styled.div`
  display: flex;
  align-items: center;
  gap: 26px;
  width: 110px;
  padding: 9px 0 0 28px;
  border-right: 1px solid #999;
`;

const SheetTab = styled.button`
  width: 96px;
  background: #fff;
  color: #217346;
  font-size: 21px;
  line-height: 25px;
  border-right: 1px solid #999;
`;

const TabsRest = styled.div`
  flex: 1;
  display: flex;
  align-items: flex-start;
  justify-content: space-between;
  padding: 4px 0 0 36px;

  ${Dots} {
    margin: 3px 16px 0 0;
  }
`;

const HScroll = styled.div`
  flex: 0 0 554px;
  display: flex;
  margin: 2px 29px 0 0;
  background: #dadada;
`;

const HThumb = styled.div`
  flex: 0 0 464px;
  margin-right: auto;
  background: #fff;
  border: 1px solid #ababab;
  border-bottom: 0;
`;

const Pane = styled.aside`
  flex: 0 0 407px;
  border-left: 1px solid #b5b5b5;
  padding-left: 17px;
  color: #444;
`;

const PaneHeader = styled.div`
  display: flex;
  align-items: center;
  padding: 10px 4px 0 0;

  h2 {
    flex: 1;
    margin: 0;
    font-size: 31px;
    line-height: 46px;
    font-weight: 400;
    color: #0e5c2f;
  }
  button {
    padding-bottom: 4px;
    margin-left: 48px;
  }
`;

const PaneTabs = styled.div`
  display: flex;
  align-items: center;
  padding: 14px 0 0 7px;
`;

const PaneTab = styled.button`
  height: 26px;
  font-size: 16px;
  font-weight: ${({$active}) => ($active ? 700 : 400)};
  color: ${({$active}) => ($active ? '#222' : '#444')};
  padding-bottom: 2px;
  padding-right: ${({$active}) => ($active ? 20 : 0)}px;
  margin-right: 7px;
  border-right: ${({$active}) => ($active ? '1px solid #dcdcdc' : '0')};
`;

const PaneIcons = styled.div`
  display: flex;
  gap: 11px;
  padding: 15px 0 0 1px;
`;

const PaneIcon = styled.button`
  display: flex;
  align-items: center;
  justify-content: center;
  width: 44px;
  height: 44px;
  background: ${({$active}) => ($active ? '#adadad' : 'none')};
`;

const PaneRule = styled.div`
  height: 24px;
  padding: 9px 0 0 119px;
  border-bottom: 2px solid #c6c6c6;
`;

const Section = styled.div`
  display: flex;
  flex-direction: column;
  padding: 8px 27px 0 4px;
`;

const SectionButton = styled.button`
  position: relative;
  display: flex;
  align-items: center;
  gap: 11px;
  height: 24px;
  padding-left: 5px;
  font-size: ${({$open}) => ($open ? 17 : 16)}px;
  font-weight: 700;
  color: ${({$open}) => ($open ? '#217346' : '#444')};
  background: ${({$hover}) => ($hover ? '#c6c6c6' : 'none')};

  span {
    padding-bottom: 2px;
  }
`;

const Fields = styled.div`
  display: flex;
  flex-direction: column;
  gap: 9px;
  padding: 9px 0 2px 28px;
`;

const Field = styled.div`
  display: flex;
  align-items: center;
  justify-content: space-between;
  font-size: 18px;

  u {
    text-underline-offset: 3px;
  }
`;

const Check = styled.div`
  display: flex;
  align-items: center;
  gap: 8px;
  height: 38px;
  padding-left: 28px;
  color: ${({$disabled}) => ($disabled ? '#999' : '#444')};

  input {
    appearance: none;
    width: 20px;
    height: 20px;
    background: #fdfdfd;
    border: 1px solid ${({$disabled}) => ($disabled ? '#ddd' : '#ababab')};
  }
  u {
    text-underline-offset: 3px;
  }
`;

const Sections = styled.div`
  display: flex;
  flex-direction: column;
  gap: 15px;
  padding: 22px 27px 0 4px;
`;

// marker ring around the property row, lies over its neighbours
const Highlight = styled.i`
  position: absolute;
  z-index: 1;
  left: -16px;
  top: -14px;
  width: 163px;
  height: 57px;
  border: 10px solid #e80a89;
  border-radius: 22px;
  pointer-events: none;
`;
